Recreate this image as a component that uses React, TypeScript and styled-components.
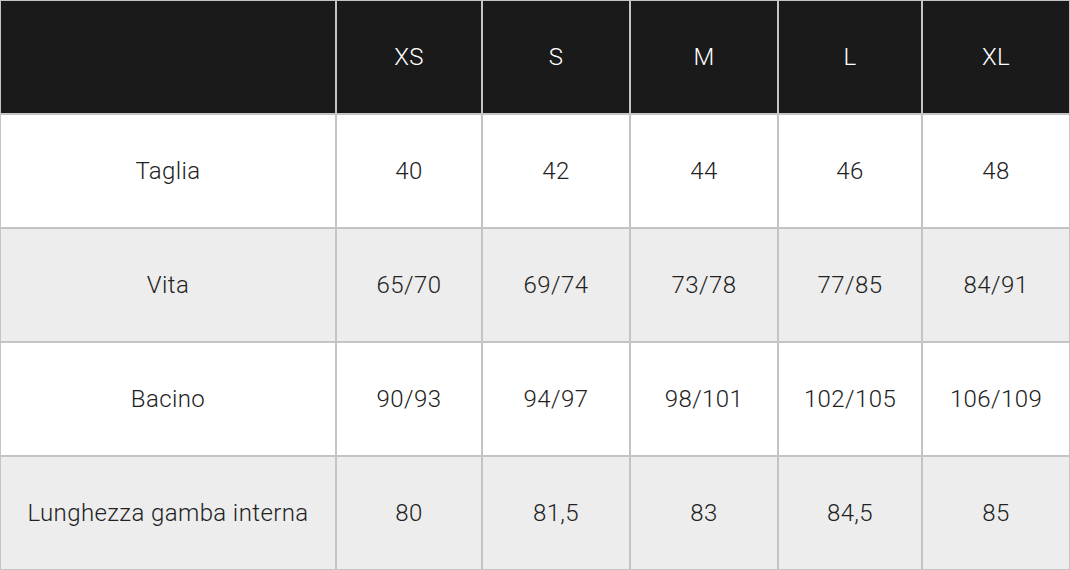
import { Fragment } from "react";
import styled, { createGlobalStyle } from "styled-components";

const GlobalStyle = createGlobalStyle`
  html, body {
    margin: 0;
    padding: 0;
    background: #fff;
  }
`;

const Grid = styled.div`
  display: grid;
  grid-template-columns: 336px 146px 148px 148px 144px 148px;
  grid-auto-rows: 114px;
  width: 1070px;
  font-family: Roboto, "Liberation Sans", sans-serif;
  font-weight: 300;
  font-size: 24px;
  letter-spacing: 0.4px;
`;

const Cell = styled.div<{ $head?: boolean; $shade?: boolean }>`
  box-sizing: border-box;
  border: 1px solid #c4c4c4;
  display: flex;
  align-items: center;
  justify-content: center;
  background: ${(p) => (p.$head ? "#1a1a1a" : p.$shade ? "#ededed" : "#fff")};
  color: ${(p) => (p.$head ? "#fff" : "#222")};
`;

const sizes = ["XS", "S", "M", "L", "XL"];

const rows: [string, string[]][] = [
  ["Taglia", ["40", "42", "44", "46", "48"]],
  ["Vita", ["65/70", "69/74", "73/78", "77/85", "84/91"]],
  ["Bacino", ["90/93", "94/97", "98/101", "102/105", "106/109"]],
  ["Lunghezza gamba interna", ["80", "81,5", "83", "84,5", "85"]],
];

export default function App() {
  return (
    <>
      <GlobalStyle />
      <Grid>
        <Cell $head />
        {sizes.map((s) => (
          <Cell $head key={s}>
            {s}
          </Cell>
        ))}
        {rows.map(([label, vals], i) => (
          <Fragment key={label}>
            <Cell $shade={i % 2 === 1}>{label}</Cell>
            {vals.map((v, j) => (
              <Cell $shade={i % 2 === 1} key={j}>
                {v}
              </Cell>
            ))}
          </Fragment>
        ))}
      </Grid>
    </>
  );
}
